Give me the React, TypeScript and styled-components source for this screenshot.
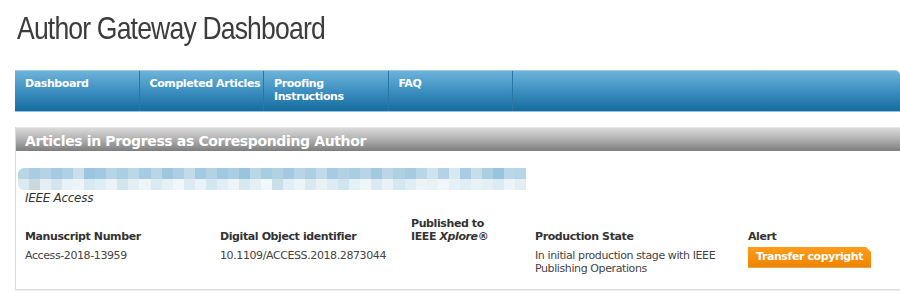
import React from 'react';
import styled, { createGlobalStyle } from 'styled-components';

const GlobalStyle = createGlobalStyle`
  body {
    margin: 0;
    background: #fff;
    font-family: 'DejaVu Sans', Verdana, sans-serif;
    color: #333;
  }
`;

const Page = styled.div`
  width: 900px;
  height: 308px;
  overflow: hidden;
`;

const Header = styled.header`
  height: 70px;
  padding: 10px 0 0 17px;
  box-sizing: border-box;
`;

const Title = styled.h1`
  margin: 0;
  font-family: 'Liberation Sans', Arial, sans-serif;
  font-weight: 400;
  font-size: 32px;
  line-height: 36px;
  letter-spacing: -1px;
  color: #3c3c3c;
  transform: scaleX(0.83);
  transform-origin: left top;
  white-space: nowrap;
`;

const NavBar = styled.nav`
  margin-left: 15px;
  height: 42px;
  display: flex;
  background: linear-gradient(#6db3da, #3d8fc0 50%, #156c9e);
  border-top: 1px solid #9ccbe6;
  border-bottom: 1px solid #8ec3e2;
  border-top-right-radius: 5px;
  box-sizing: border-box;
`;

const NavItem = styled.div<{ $last?: boolean }>`
  width: 124.5px;
  flex: ${({ $last }) => ($last ? '1' : 'none')};
  padding: 6px 10px 0;
  box-sizing: border-box;
  border-right: ${({ $last }) => ($last ? 'none' : '1px solid #2a77a6')};
  color: #fff;
  font-size: 11px;
  font-weight: bold;
  line-height: 13px;
  letter-spacing: -0.4px;
  white-space: nowrap;
`;

const Panel = styled.section`
  margin: 15px 0 0 15px;
  height: 163px;
  box-sizing: border-box;
  border: 1px solid #dcdcdc;
  border-top: none;
  border-right: none;
  box-shadow: 0 1px 1px #eee;
`;

const PanelHeader = styled.h2`
  margin: 0;
  height: 26px;
  padding: 3px 0 0 9px;
  box-sizing: border-box;
  background: linear-gradient(#dadada, #b4b4b4 45%, #7e7e7e);
  border-top: 1px solid #e8e8e8;
  border-bottom: 2px solid #fff;
  color: #fff;
  font-size: 14px;
  font-weight: bold;
  line-height: 20px;
  letter-spacing: -0.36px;
`;

const Blur = styled.div`
  margin: 15px 0 0 2px;
  width: 508px;
  height: 22px;
  display: grid;
  grid-template-columns: repeat(46, 1fr);
  grid-template-rows: 11px 11px;
  filter: blur(0.6px);
  border-radius: 6px 0 0 6px;
  overflow: hidden;
`;

const Cell = styled.span<{ $c: string }>`
  background: ${({ $c }) => $c};
`;

const Journal = styled.div`
  margin: 1px 0 0 9px;
  font-style: italic;
  font-size: 12px;
  line-height: 14px;
  letter-spacing: -0.3px;
  color: #333;
`;

const Table = styled.div`
  margin: 12px 0 0 9px;
  display: grid;
  grid-template-columns: 195px 191px 124px 213px 1fr;
  row-gap: 5px;
  font-size: 11px;
  line-height: 13px;
  letter-spacing: -0.4px;
`;

const Head = styled.div`
  align-self: end;
  font-weight: bold;
  color: #333;
`;

const Data = styled.div`
  color: #444;
  padding-top: 1px;
`;

const AlertButton = styled.span`
  display: inline-block;
  position: relative;
  padding: 3px 8px 3px 8px;
  background: linear-gradient(#ff9d1c, #f08400);
  color: #fff;
  font-weight: bold;
  font-size: 11px;
  line-height: 14px;
  border-bottom: 1px solid #e9a553;
  margin-top: -2px;
  &::after {
    content: '';
    position: absolute;
    top: 0;
    right: 0;
    border-style: solid;
    border-width: 0 5px 5px 0;
    border-color: transparent #fff transparent transparent;
  }
`;

const top = ['#b9d6e6','#a8cde2','#b4d3e5','#a4cbe1','#b0d1e4','#c9e0ec','#9cc6df','#a1c9e0','#b5d4e5','#aacee2','#bcd8e7','#a6cce1','#b8d6e6','#9ec7df','#aecfe3','#c2dbe9','#a2cae0','#b3d3e5','#a0c8e0','#aacee2','#99c4de','#bad7e7','#a7cde2','#b1d2e4','#a3cae1','#b6d5e6','#abcfe3','#c0dae8','#a5cce1','#b2d2e4','#a9cee2','#b7d5e6','#a1c9e0','#bbd7e7','#aed0e3','#a4cbe1','#b9d6e6','#cfe3ee','#b3d3e5','#d8e8f1','#a8cde2','#c6deeb','#aacee2','#99c4de','#bad7e7','#b6d5e6'];
const bottom = ['#dbe9f1','#cdd8de','#e4eff5','#d3e6f0','#e8f2f7','#ecf4f8','#d6e8f1','#dfeef5','#eaf3f7','#d2e5ef','#e3eff5','#eef5f9','#d9eaf2','#e6f1f6','#f0f6fa','#dcebf3','#e9f2f7','#d4e6f0','#e1eef4','#edf5f9','#d7e8f1','#e5f0f6','#f1f7fa','#c9dfeb','#e2eef5','#ebf4f8','#d8e9f2','#e7f1f6','#ddecf3','#d0e4ee','#e4f0f5','#eff6f9','#dbeaf2','#e8f2f7','#d5e7f0','#e0edf4','#ecf4f8','#e9f2f7','#f0f6fa','#e6f0f6','#dfedf4','#e8f2f7','#e3eff5','#dcebf3','#ecf4f8','#e1eef4'];

export default function App() {
  return (
    <Page>
      <GlobalStyle />
      <Header>
        <Title>Author Gateway Dashboard</Title>
      </Header>
      <NavBar>
        <NavItem>Dashboard</NavItem>
        <NavItem>Completed Articles</NavItem>
        <NavItem>Proofing<br />Instructions</NavItem>
        <NavItem>FAQ</NavItem>
        <NavItem $last />
      </NavBar>
      <Panel>
        <PanelHeader>Articles in Progress as Corresponding Author</PanelHeader>
        <Blur>
          {top.map((c, i) => <Cell key={'t' + i} $c={c} />)}
          {bottom.map((c, i) => <Cell key={'b' + i} $c={c} />)}
        </Blur>
        <Journal>IEEE Access</Journal>
        <Table>
          <Head>Manuscript Number</Head>
          <Head>Digital Object identifier</Head>
          <Head>Published to<br />IEEE <i>Xplore</i>®</Head>
          <Head>Production State</Head>
          <Head>Alert</Head>
          <Data>Access-2018-13959</Data>
          <Data>10.1109/ACCESS.2018.2873044</Data>
          <Data />
          <Data>In initial production stage with IEEE<br />Publishing Operations</Data>
          <Data><AlertButton>Transfer copyright</AlertButton></Data>
        </Table>
      </Panel>
    </Page>
  );
}
